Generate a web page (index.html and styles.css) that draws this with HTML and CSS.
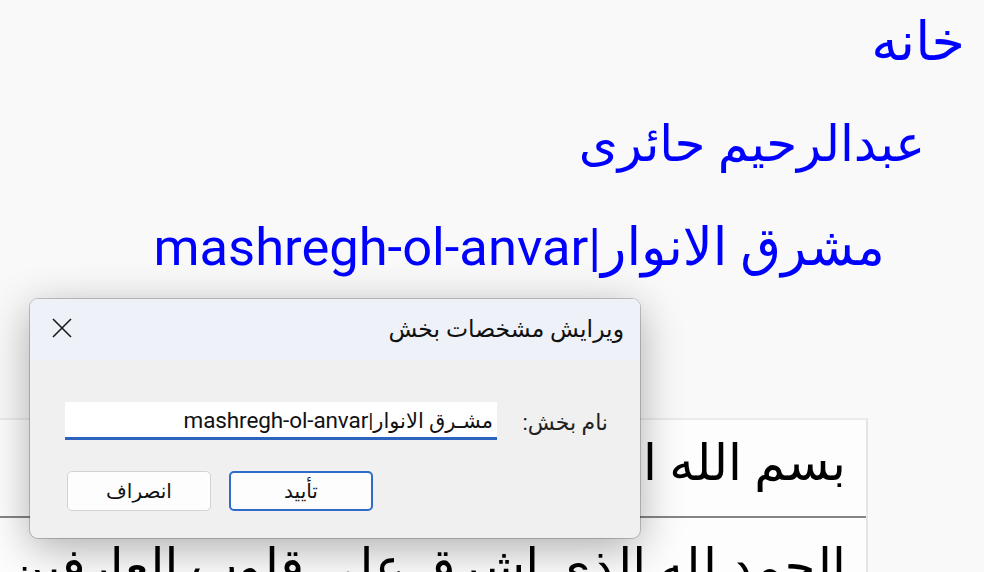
FILE: index.html
```html
<!DOCTYPE html>
<html lang="fa" dir="rtl">
<head>
<meta charset="utf-8">
<title>مشرق الانوار</title>
<link rel="stylesheet" href="styles.css">
</head>
<body>
<div class="page">
  <nav class="crumbs">
    <a class="crumb lvl0">خانه</a>
    <a class="crumb lvl1">عبدالرحیم حائری</a>
    <a class="crumb lvl2">مشرق الانوار|mashregh-ol-anvar</a>
  </nav>
  <section class="panel">
    <div class="row first">بسم الله الرحمن الرحیم</div>
    <div class="row second">الحمد لله الذی اشرق علی قلوب العارفین بنور معرفته</div>
  </section>
</div>

<div class="dialog" dir="rtl">
  <div class="dlg-head">
    <span class="dlg-title">ویرایش مشخصات بخش</span>
    <span class="dlg-close" aria-label="close">
      <svg width="20" height="20" viewBox="0 0 20 20"><path d="M1 1 L19 19 M19 1 L1 19" stroke="#1a1a1a" stroke-width="1.6" fill="none"/></svg>
    </span>
  </div>
  <div class="dlg-body">
    <div class="field">
      <label class="field-label">نام بخش:</label>
      <div class="input">مشـرق الانوار|<span class="lat">mashregh-ol-anvar</span></div>
    </div>
    <div class="actions">
      <button class="btn primary">تأیید</button>
      <button class="btn">انصراف</button>
    </div>
  </div>
</div>
</body>
</html>
```
FILE: styles.css
```css
html, body {
  margin: 0;
  padding: 0;
}
body {
  width: 984px;
  height: 572px;
  overflow: hidden;
  background: #f9f9f9;
  font-family: Roboto, "DejaVu Sans", sans-serif;
  position: relative;
}
.page {
  display: flex;
  flex-direction: column;
  height: 572px;
  overflow: hidden;
}
.crumbs {
  display: flex;
  flex-direction: column;
  align-items: flex-start;
  margin-top: -10px;
}
.crumb {
  color: #0000ff;
  font-size: 54px;
  line-height: 103px;
  height: 103px;
  white-space: nowrap;
}
.lvl0 { margin-right: 19px; }
.lvl1 { margin-right: 59px; font-size: 50px; }
.lvl2 { margin-right: 99px; font-size: 52.5px; }

.panel {
  margin-top: 119px;
  margin-right: 116px;
  margin-left: -40px;
  background: #fdfdfd;
  border-top: 2px solid #ebebeb;
  border-right: 2px solid #e6e6e6;
  flex: none;
}
.row {
  height: 96px;
  padding-right: 20px;
  font-size: 50px;
  line-height: 86px;
  color: #000;
  white-space: nowrap;
  overflow: hidden;
}
.row.first {
  border-bottom: 2px solid #858585;
}
.row.second {
  height: 52px;
  padding-top: 6px;
}

.dialog {
  position: absolute;
  left: 30px;
  top: 299px;
  width: 610px;
  height: 239px;
  border-radius: 8px;
  overflow: hidden;
  background: #f0f0f0;
  box-shadow: 0 0 0 1px rgba(0,0,0,0.2), 0 10px 44px rgba(0,0,0,0.32);
  font-family: Roboto, "DejaVu Sans", sans-serif;
}
.dlg-head {
  height: 61px;
  background: #eef2f8;
  display: flex;
  align-items: center;
  justify-content: space-between;
  padding: 0 16px 0 22px;
}
.dlg-title {
  font-size: 23.5px;
  color: #111;
  margin-top: -2px;
}
.dlg-close {
  display: flex;
  margin-top: -3px;
}
.dlg-body {
  display: flex;
  flex-direction: column;
  padding: 42px 32px 0 35px;
}
.field {
  display: flex;
  align-items: center;
  gap: 23px;
}
.field-label {
  font-size: 22px;
  color: #222;
  white-space: nowrap;
  width: 88px;
  margin-top: 2px;
}
.input {
  flex: 1;
  height: 33px;
  padding-top: 2px;
  background: #fff;
  border-bottom: 3px solid #2b63bf;
  font-size: 21px;
  line-height: 33px;
  padding-right: 4px;
  color: #111;
  white-space: nowrap;
  overflow: hidden;
}
.lat {
  font-size: 22.5px;
  letter-spacing: -0.1px;
}
.actions {
  display: flex;
  justify-content: flex-end;
  gap: 18px;
  margin-top: 31px;
  padding-left: 2px;
}
.btn {
  width: 144px;
  height: 40px;
  background: #fdfdfd;
  border: 1.5px solid #d2d2d2;
  border-radius: 5px;
  font-family: Roboto, "DejaVu Sans", sans-serif;
  font-size: 20px;
  color: #111;
  padding: 0;
}
.btn.primary {
  border: 2px solid #2f6bc8;
}
```
